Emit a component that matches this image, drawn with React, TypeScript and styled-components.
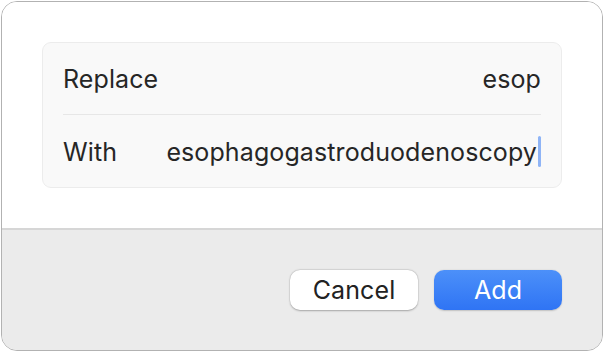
import React from "react";
import styled, { createGlobalStyle } from "styled-components";

const Global = createGlobalStyle`
  html, body { margin: 0; padding: 0; background: #ffffff; }
  body { font-family: Inter, "Noto Sans", "Liberation Sans", sans-serif; -webkit-font-smoothing: antialiased; }
`;

const Window = styled.div`
  box-sizing: border-box;
  margin: 1px;
  width: 602px;
  height: 350px;
  border: 1px solid #b2b2b2;
  border-radius: 16px;
  overflow: hidden;
  display: flex;
  flex-direction: column;
  background: #ffffff;
`;

const Body = styled.div`
  box-sizing: border-box;
  height: 226px;
  padding: 40px 40px 0 40px;
  background: #ffffff;
`;

const Card = styled.div`
  box-sizing: border-box;
  height: 146px;
  border: 1px solid #ececec;
  border-radius: 9px;
  background: #f9f9f9;
  padding: 0 20px;
  display: flex;
  flex-direction: column;
`;

const Row = styled.div<{ $offset?: number }>`
  display: flex;
  align-items: center;
  justify-content: space-between;
  height: 71px;
  padding-top: ${(p) => p.$offset ?? 0}px;
  box-sizing: border-box;
  font-size: 25px;
  color: #262626;
  letter-spacing: 0.1px;
`;

const Divider = styled.div`
  height: 1px;
  background: #e7e7e7;
`;

const Label = styled.span``;

const Value = styled.span`
  display: flex;
  align-items: center;
`;

const Caret = styled.span`
  display: inline-block;
  width: 3px;
  height: 31px;
  margin-left: 1px;
  border-radius: 1.5px;
  background: #8fb4f6;
`;

const Footer = styled.div`
  flex: 1;
  border-top: 2px solid #d6d6d6;
  background: #ebebeb;
  display: flex;
  align-items: center;
  justify-content: flex-end;
  gap: 16px;
  padding: 0 40px 0 0;
`;

const Button = styled.button<{ $primary?: boolean }>`
  box-sizing: border-box;
  width: 128px;
  height: 40px;
  border: none;
  border-radius: 10px;
  font-family: inherit;
  font-size: 25px;
  letter-spacing: 0.1px;
  padding: 0 0 1px;
  color: ${(p) => (p.$primary ? "#ffffff" : "#222222")};
  background: ${(p) =>
    p.$primary ? "linear-gradient(#4c90f9, #2f74f4)" : "#ffffff"};
  box-shadow: ${(p) =>
    p.$primary
      ? "0 0.5px 1.5px rgba(0,0,0,0.18)"
      : "0 0.5px 2px rgba(0,0,0,0.28), 0 0 0 0.5px rgba(0,0,0,0.06)"};
`;

export default function App() {
  return (
    <>
      <Global />
      <Window>
        <Body>
          <Card>
            <Row>
              <Label>Replace</Label>
              <Value>esop</Value>
            </Row>
            <Divider />
            <Row $offset={2}>
              <Label>With</Label>
              <Value>
                esophagogastroduodenoscopy
                <Caret />
              </Value>
            </Row>
          </Card>
        </Body>
        <Footer>
          <Button>Cancel</Button>
          <Button $primary>Add</Button>
        </Footer>
      </Window>
    </>
  );
}
